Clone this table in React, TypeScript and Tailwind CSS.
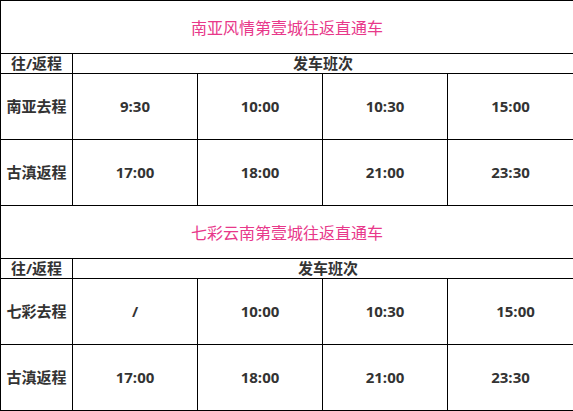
import React from 'react';

type Row = { label: string; times: string[] };
type Section = { title: string; rows: Row[]; shifted?: boolean };

const sections: Section[] = [
  {
    title: '南亚风情第壹城往返直通车',
    rows: [
      { label: '南亚去程', times: ['9:30', '10:00', '10:30', '15:00'] },
      { label: '古滇返程', times: ['17:00', '18:00', '21:00', '23:30'] },
    ],
  },
  {
    title: '七彩云南第壹城往返直通车',
    shifted: true,
    rows: [
      { label: '七彩去程', times: ['/', '10:00', '10:30', '15:00'] },
      { label: '古滇返程', times: ['17:00', '18:00', '21:00', '23:30'] },
    ],
  },
];

const cell = 'border border-black p-0 text-center align-middle';

export default function App() {
  return (
    <div className="w-[573px] h-[411px] bg-white text-[#333] font-['Open_Sans','Noto_Sans_CJK_SC',sans-serif]">
      <table className="w-[573px] table-fixed border-collapse">
        <colgroup>
          <col className="w-[72px]" />
          <col className="w-[125px]" />
          <col className="w-[125px]" />
          <col className="w-[125px]" />
          <col className="w-[126px]" />
        </colgroup>
        <tbody>
          {sections.map((s) => (
            <React.Fragment key={s.title}>
              <tr>
                <td colSpan={5} className={`${cell} h-[53px] text-[16px] text-[#e8388a] font-['Noto_Sans_CJK_SC',sans-serif]`}>
                  {s.title}
                </td>
              </tr>
              <tr>
                <td className={`${cell} h-[20px] text-[15px] font-bold leading-[19px]`}>往/返程</td>
                <td colSpan={4} className={`${cell} h-[20px] text-[15px] font-bold leading-[19px] ${s.shifted ? 'pl-[10px]' : ''}`}>
                  发车班次
                </td>
              </tr>
              {s.rows.map((r) => (
                <tr key={r.label}>
                  <td className={`${cell} h-[66px] text-[15px] font-bold`}>{r.label}</td>
                  {r.times.map((t, i) => (
                    <td
                      key={i}
                      className={`${cell} h-[66px] text-[15px] font-bold ${s.shifted && i === 3 && t === '15:00' ? 'pl-[10px]' : ''}`}
                    >
                      {t}
                    </td>
                  ))}
                </tr>
              ))}
            </React.Fragment>
          ))}
        </tbody>
      </table>
    </div>
  );
}
